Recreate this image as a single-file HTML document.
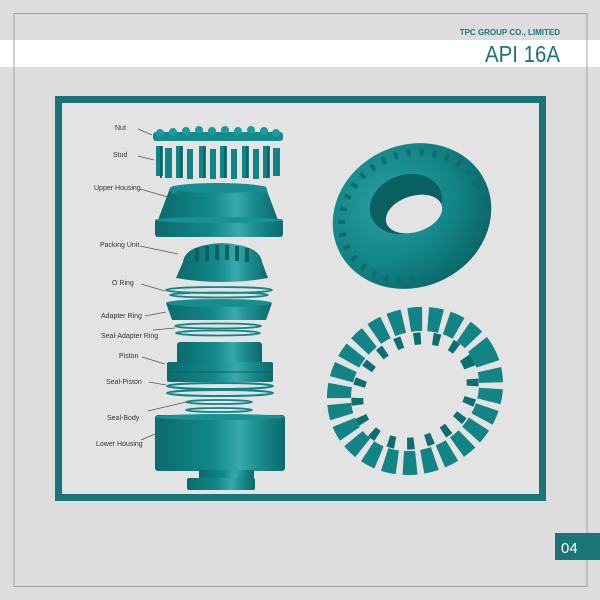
<!DOCTYPE html>
<html><head><meta charset="utf-8"><style>
html,body{margin:0;padding:0;background:#dddddd;}
body{width:600px;height:600px;position:relative;overflow:hidden;font-family:"Liberation Sans",sans-serif;}
</style></head><body>
<svg width="600" height="600" viewBox="0 0 600 600" xmlns="http://www.w3.org/2000/svg" style="position:absolute;left:0;top:0">
<defs>
<linearGradient id="cyl" x1="0" x2="1" y1="0" y2="0">
<stop offset="0" stop-color="#0b6a6c"/><stop offset="0.45" stop-color="#12898b"/><stop offset="0.65" stop-color="#39a9ab"/><stop offset="0.8" stop-color="#1a8c8e"/><stop offset="1" stop-color="#0b6a6c"/>
</linearGradient>
<radialGradient id="tor" cx="0.4" cy="0.35" r="0.7"><stop offset="0" stop-color="#2a9fa1"/><stop offset="0.6" stop-color="#128486"/><stop offset="1" stop-color="#0a6466"/></radialGradient>
</defs>
<rect width="600" height="600" fill="#dddddd"/>
<rect x="0" y="40" width="600" height="27" fill="#ffffff"/>
<rect x="14" y="13.5" width="573" height="573" fill="none" stroke="#a0a0a0" stroke-width="1"/>
<text x="560" y="35" text-anchor="end" font-size="8" font-weight="bold" fill="#1c7478" font-family="Liberation Sans, sans-serif">TPC GROUP CO., LIMITED</text>
<text x="560" y="62" text-anchor="end" font-size="23" fill="#1c7478" font-family="Liberation Sans, sans-serif" textLength="75" lengthAdjust="spacingAndGlyphs">API 16A</text>
<rect x="58.5" y="99.5" width="484" height="398" fill="#e3e3e3" stroke="#1b7478" stroke-width="7"/>
<rect x="555" y="533" width="45" height="27" fill="#1b7478"/>
<text x="561" y="553" font-size="15" fill="#ffffff" font-family="Liberation Sans, sans-serif">04</text>

<g font-size="7" fill="#333" font-family="Liberation Sans, sans-serif">
<text x="115" y="130">Nut</text>
<text x="113" y="157">Stud</text>
<text x="94" y="190">Upper Housing</text>
<text x="100" y="247">Packing Unit</text>
<text x="112" y="285">O Ring</text>
<text x="101" y="318">Adapter Ring</text>
<text x="101" y="338">Seal-Adapter Ring</text>
<text x="119" y="358">Piston</text>
<text x="106" y="384">Seal-Piston</text>
<text x="107" y="420">Seal-Body</text>
<text x="96" y="446">Lower Housing</text>
</g>
<g stroke="#555" stroke-width="0.7">
<line x1="138" y1="129" x2="152" y2="135"/>
<line x1="138" y1="156" x2="154" y2="160"/>
<line x1="140" y1="189" x2="168" y2="197"/>
<line x1="140" y1="246" x2="178" y2="254"/>
<line x1="141" y1="284" x2="165" y2="291"/>
<line x1="145" y1="316" x2="166" y2="312"/>
<line x1="153" y1="330" x2="175" y2="328"/>
<line x1="142" y1="357" x2="165" y2="364"/>
<line x1="149" y1="382" x2="166" y2="385"/>
<line x1="148" y1="411" x2="186" y2="402"/>
<line x1="141" y1="440" x2="155" y2="434"/>
</g>

<g fill="#138a8c">
<rect x="153" y="132" width="130" height="9" rx="3"/>
<g fill="#1e9a9c">
<circle cx="160" cy="133" r="4"/><circle cx="173" cy="132" r="4"/><circle cx="186" cy="131" r="4"/><circle cx="199" cy="130" r="4"/><circle cx="212" cy="131" r="4"/><circle cx="225" cy="130" r="4"/><circle cx="238" cy="131" r="4"/><circle cx="251" cy="130" r="4"/><circle cx="264" cy="131" r="4"/><circle cx="276" cy="133" r="4"/>
</g>
</g>
<g fill="#128486">
<rect x="156" y="146" width="7" height="30"/><rect x="165" y="148" width="7" height="30"/><rect x="176" y="146" width="7" height="32"/><rect x="187" y="149" width="6" height="30"/><rect x="199" y="146" width="7" height="32"/><rect x="210" y="149" width="6" height="30"/><rect x="220" y="146" width="7" height="32"/><rect x="231" y="149" width="6" height="30"/><rect x="242" y="146" width="7" height="32"/><rect x="253" y="149" width="6" height="30"/><rect x="263" y="146" width="7" height="32"/><rect x="273" y="148" width="7" height="28"/>
</g>
<g fill="#0b6466"><rect x="160" y="146" width="2" height="32"/><rect x="180" y="146" width="2" height="32"/><rect x="203" y="146" width="2" height="32"/><rect x="224" y="146" width="2" height="32"/><rect x="246" y="146" width="2" height="32"/><rect x="267" y="146" width="2" height="32"/></g>
<path d="M170 188 L266 188 L278 220 L158 220 Z" fill="url(#cyl)"/>
<ellipse cx="218" cy="188" rx="48" ry="5" fill="#168e90"/>
<circle cx="174" cy="190" r="4" fill="#138a8c"/><circle cx="263" cy="190" r="4" fill="#138a8c"/>
<rect x="155" y="219" width="128" height="18" rx="3" fill="url(#cyl)"/>
<ellipse cx="219" cy="220" rx="64" ry="3" fill="#1a9193"/>
<path d="M183 262 Q185 245 222 243 Q260 245 262 262 L268 278 Q222 286 176 278 Z" fill="url(#cyl)"/>
<g fill="#0a6062"><rect x="195" y="248" width="4" height="14"/><rect x="205" y="246" width="4" height="15"/><rect x="215" y="245" width="4" height="15"/><rect x="225" y="245" width="4" height="15"/><rect x="235" y="246" width="4" height="15"/><rect x="245" y="248" width="4" height="14"/></g>
<ellipse cx="219" cy="290" rx="53" ry="3" fill="none" stroke="#128486" stroke-width="1.8"/>
<ellipse cx="219" cy="295" rx="49" ry="2.5" fill="none" stroke="#128486" stroke-width="1.8"/>
<path d="M166 303 L272 303 L266 320 L172 320 Z" fill="url(#cyl)"/>
<ellipse cx="219" cy="303" rx="53" ry="4" fill="#168e90"/>
<ellipse cx="218" cy="326" rx="43" ry="2.5" fill="none" stroke="#128486" stroke-width="1.8"/>
<ellipse cx="218" cy="333" rx="42" ry="2.5" fill="none" stroke="#128486" stroke-width="1.8"/>
<rect x="177" y="342" width="85" height="22" rx="3" fill="url(#cyl)"/>
<rect x="167" y="362" width="106" height="20" rx="2" fill="url(#cyl)"/>
<line x1="167" y1="372" x2="273" y2="372" stroke="#0b6466" stroke-width="1"/>
<ellipse cx="220" cy="386" rx="53" ry="3" fill="none" stroke="#128486" stroke-width="2"/>
<ellipse cx="220" cy="393" rx="53" ry="3" fill="none" stroke="#128486" stroke-width="2"/>
<ellipse cx="219" cy="402" rx="33" ry="2" fill="none" stroke="#128486" stroke-width="1.8"/>
<ellipse cx="219" cy="410" rx="33" ry="2" fill="none" stroke="#128486" stroke-width="1.8"/>
<rect x="155" y="415" width="130" height="56" rx="3" fill="url(#cyl)"/>
<ellipse cx="220" cy="417" rx="65" ry="3" fill="#1a9193"/>
<rect x="199" y="470" width="55" height="9" fill="url(#cyl)"/>
<rect x="187" y="478" width="68" height="12" rx="2" fill="url(#cyl)"/>

<ellipse cx="412" cy="216" rx="81" ry="71" transform="rotate(-25 412 216)" fill="url(#tor)"/>
<ellipse cx="406" cy="204" rx="37" ry="29" transform="rotate(-20 406 204)" fill="#0a5f61"/>
<ellipse cx="414" cy="214" rx="29" ry="18" transform="rotate(-18 414 214)" fill="#e3e3e3"/>
<ellipse cx="412" cy="216" rx="72" ry="62" transform="rotate(-25 412 216)" fill="none" stroke="#0c6e70" stroke-width="7" stroke-dasharray="4 9"/>
<ellipse cx="415" cy="391" rx="78" ry="70" transform="rotate(-30 415 391)" fill="none" stroke="#128486" stroke-width="24" stroke-dasharray="13 6"/>
<ellipse cx="415" cy="391" rx="60" ry="50" transform="rotate(-30 415 391)" fill="none" stroke="#0c6e70" stroke-width="12" stroke-dasharray="7 12"/>
</svg>
</body></html>
